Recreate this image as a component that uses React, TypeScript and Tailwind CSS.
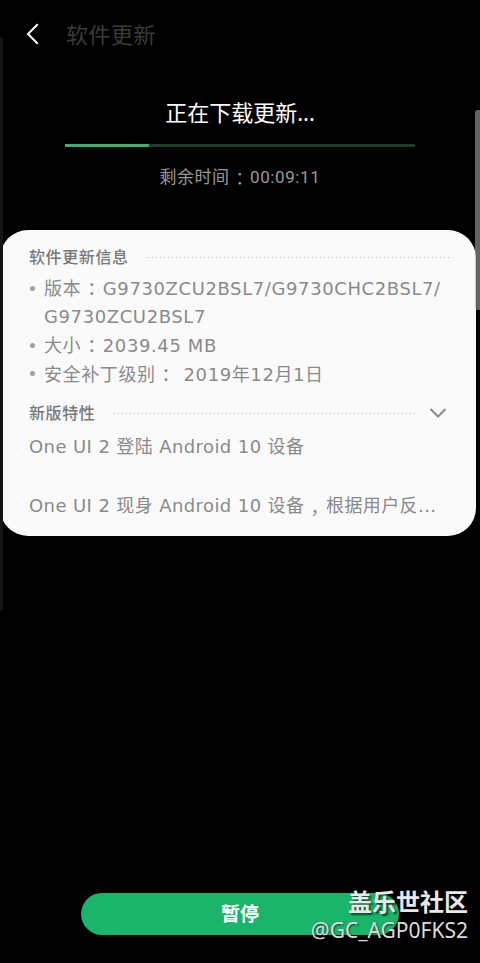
import React from "react";

function P({ c }: { c: string }) {
  return (
    <span className="inline-block w-[1.2em] text-center whitespace-nowrap font-['Noto_Sans_CJK_SC',sans-serif] [font-feature-settings:'halt']">
      {c}
    </span>
  );
}

function Dots() {
  return (
    <div className="flex-1 h-px bg-[linear-gradient(to_right,#b5b5b5_1px,transparent_1px)] bg-[length:4px_1px]" />
  );
}

function Row({ children, bullet }: { children: React.ReactNode; bullet?: boolean }) {
  return (
    <div className="flex items-center h-[28.5px] text-[18px] leading-[28.5px] text-[#8a8a8a] tracking-[0.6px] whitespace-nowrap">
      <span className="w-[15px] shrink-0 flex items-center justify-start">
        {bullet && <span className="block w-[5px] h-[5px] rounded-full bg-[#a0a0a0] ml-[1px]" />}
      </span>
      <span>{children}</span>
    </div>
  );
}

export default function App() {
  return (
    <div className="relative w-[480px] h-[963px] bg-black overflow-hidden flex flex-col font-['Noto_Sans','Noto_Sans_CJK_SC',sans-serif]">
      {/* left edge line */}
      <div className="absolute left-0 top-[38px] w-[3px] h-[572px] bg-[#151515]" />

      {/* header */}
      <div className="flex items-center h-[68px] pl-[26px]">
        <svg width="14" height="22" viewBox="0 0 14 22" className="shrink-0">
          <path d="M11 2 L2 11 L11 20" fill="none" stroke="#ffffff" strokeWidth="2" strokeLinecap="square" />
        </svg>
        <span className="ml-[26px] text-[22px] leading-[30px] text-[#3a3a3a] tracking-[0.5px]">软件更新</span>
      </div>

      <div className="mt-[29px] text-center text-[22px] leading-[30px] text-white">正在下载更新...</div>

      <div className="mt-[17px] mx-[65px] h-[3px] bg-[#1c3d2b] flex">
        <div className="h-full bg-[#3db06e]" style={{ width: "24%" }} />
      </div>

      <div className="mt-[18px] h-[24px] flex items-center justify-center text-[17px] leading-[24px] text-[#9a9a9a] whitespace-nowrap">
        <span className="tracking-[0.5px]">剩余时间</span>
        <P c="：" />
        <span className="tracking-[0.6px] font-['Roboto',sans-serif]">00:09:11</span>
      </div>

      {/* card */}
      <div className="mt-[41px] w-[476px] rounded-[28px] bg-[#fafafa] pt-[16px] pb-[16px] pl-[29px] pr-[24px] font-['DejaVu_Sans','Noto_Sans_CJK_SC',sans-serif]">
        <div className="flex items-center h-[22px]">
          <span className="text-[16px] leading-[22px] font-medium text-[#787878] tracking-[0.6px] font-['Noto_Sans','Noto_Sans_CJK_SC',sans-serif]">
            软件更新信息
          </span>
          <span className="ml-[19px] flex-1 flex">
            <Dots />
          </span>
        </div>
        <div className="mt-[6px]">
          <Row bullet>
            版本<P c="：" />G9730ZCU2BSL7/G9730CHC2BSL7/
          </Row>
          <Row>G9730ZCU2BSL7</Row>
          <Row bullet>
            大小<P c="：" />2039.45 MB
          </Row>
          <Row bullet>
            安全补丁级别<P c="：" /> 2019年12月1日
          </Row>
        </div>
        <div className="mt-[14px] flex items-center h-[22px]">
          <span className="text-[16px] leading-[22px] font-medium text-[#787878] tracking-[0.6px] font-['Noto_Sans','Noto_Sans_CJK_SC',sans-serif]">
            新版特性
          </span>
          <span className="ml-[19px] flex-1 flex">
            <Dots />
          </span>
          <svg width="18" height="12" viewBox="0 0 18 12" className="ml-[14px] mr-[5px]">
            <path d="M1.5 2 L9 9.5 L16.5 2" fill="none" stroke="#8a8a8a" strokeWidth="2" />
          </svg>
        </div>
        <div className="mt-[9px] h-[28px] flex items-center text-[18px] leading-[28px] text-[#8a8a8a] tracking-[0.4px] whitespace-nowrap">
          One UI 2 登陆 Android 10 设备
        </div>
        <div className="mt-[31px] h-[28px] flex items-center text-[18px] leading-[28px] text-[#8a8a8a] tracking-[0.4px] whitespace-nowrap overflow-hidden">
          <span>One UI 2 现身 Android 10 设备</span>
          <P c="，" />
          <span>根据用户反...</span>
        </div>
      </div>

      <div className="flex-1" />

      <div className="mb-[28px] ml-[81px] w-[318px] h-[42px] rounded-full bg-[#1bb46b] flex items-center justify-center">
        <span className="text-white text-[19px] font-bold">暂停</span>
      </div>

      {/* scrollbar */}
      <div className="absolute right-0 top-[110px] w-[5px] h-[200px] rounded-l-[3px] bg-[#9ca9a5]/60" />

      {/* watermark */}
      <div className="absolute right-[12px] bottom-[20px] flex flex-col items-end">
        <span className="text-[24px] leading-[30px] font-bold text-[#e8e8e8] [text-shadow:2px_2px_2px_rgba(0,0,0,0.6)]">
          盖乐世社区
        </span>
        <span className="text-[21px] leading-[26px] text-[#dcdcdc] [text-shadow:1px_1px_2px_rgba(0,0,0,0.6)]">
          @GC_AGP0FKS2
        </span>
      </div>
    </div>
  );
}
